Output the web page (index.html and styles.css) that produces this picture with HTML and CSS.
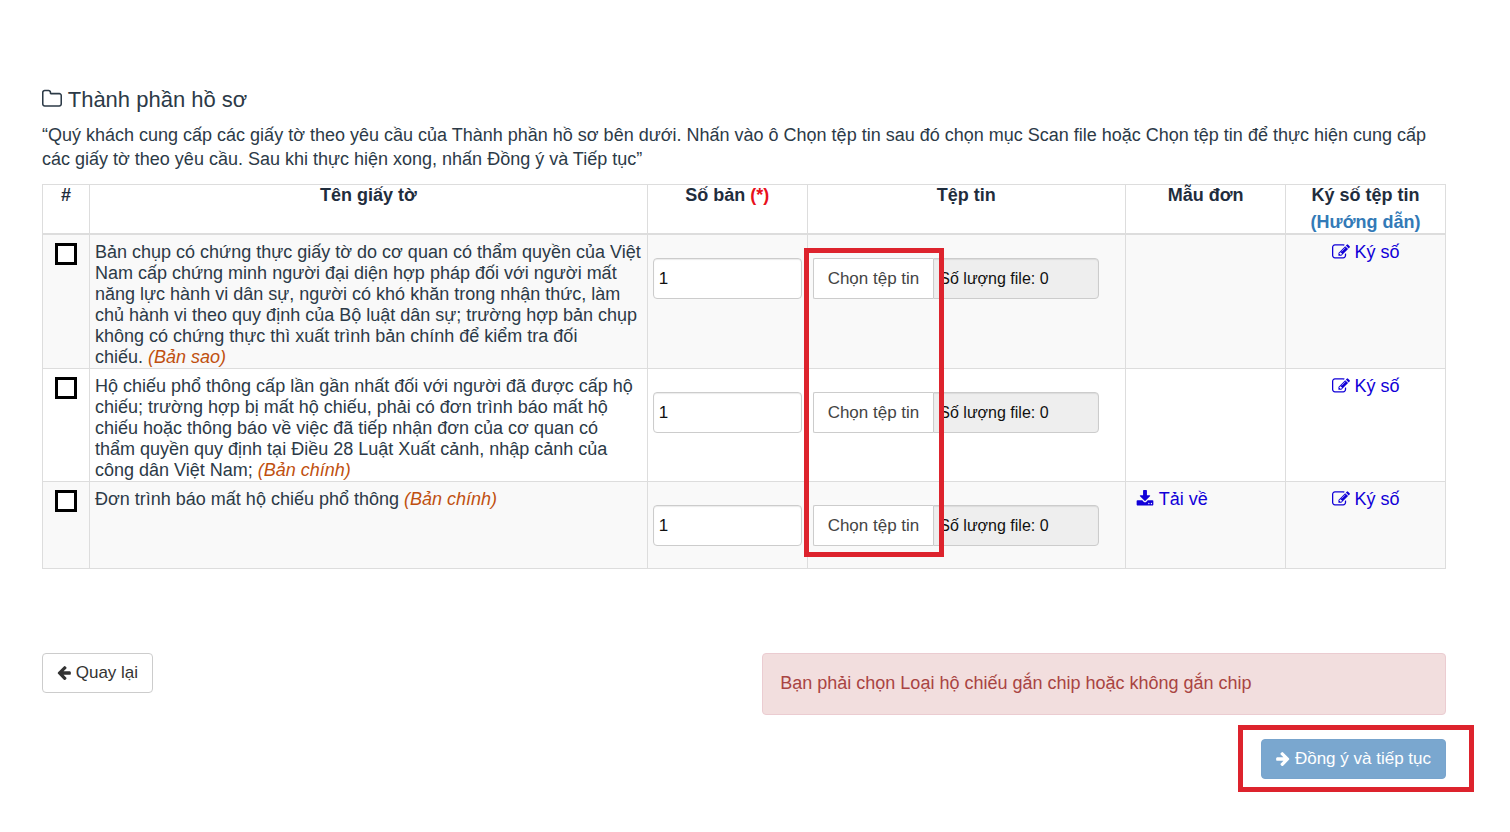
FILE: index.html
```html
<!DOCTYPE html>
<html lang="vi">
<head>
    <meta charset="UTF-8">
    <meta name="viewport" content="width=device-width, initial-scale=1.0">
    <title>Thành phần hồ sơ</title>
    <link rel="stylesheet" href="styles.css">
</head>
<body>
    <svg class="sprite" aria-hidden="true">
        <symbol id="folder" viewBox="96 0 1664 1792"><path d="M1632 1312v-704q0-40-28-68t-68-28h-704q-40 0-68-28t-28-68v-64q0-40-28-68t-68-28h-320q-40 0-68 28t-28 68v960q0 40 28 68t68 28h1216q40 0 68-28t28-68zm128-704v704q0 92-66 158t-158 66h-1216q-92 0-158-66t-66-158v-960q0-92 66-158t158-66h320q92 0 158 66t66 158v32h672q92 0 158 66t66 158z"/></symbol>
        <symbol id="arrow" viewBox="110 0 1570 1792"><path d="M1664 896v128q0 53-32.500 90.500t-84.500 37.500h-704l293 294q38 36 38 90t-38 90l-75 76q-37 37-90 37-52 0-91-37l-651-652q-37-37-37-90 0-52 37-91l651-650q38-38 91-38 52 0 90 38l75 74q38 38 38 91t-38 91l-293 293h704q52 0 84.500 37.500t32.500 90.500z"/></symbol>
        <symbol id="download" viewBox="0 0 1792 1792"><path d="M1344 1344q0-26-19-45t-45-19-45 19-19 45 19 45 45 19 45-19 19-45zm256 0q0-26-19-45t-45-19-45 19-19 45 19 45 45 19 45-19 19-45zm128-224v320q0 40-28 68t-68 28h-1472q-40 0-68-28t-28-68v-320q0-40 28-68t68-28h465l135 136q58 56 136 56t136-56l136-136h464q40 0 68 28t28 68zm-325-569q17 41-14 70l-448 448q-18 19-45 19t-45-19l-448-448q-31-29-14-70 17-39 59-39h256v-448q0-26 19-45t45-19h256q26 0 45 19t19 45v448h256q42 0 59 39z"/></symbol>
        <symbol id="edit" viewBox="0 0 1792 1792"><path d="M888 1184l116-116-152-152-116 116v56h96v96h56zm440-720q-16-16-33 1l-350 350q-17 17-1 33t33-1l350-350q17-17 1-33zm80 594v190q0 119-84.500 203.500t-203.500 84.500h-832q-119 0-203.500-84.500t-84.500-203.500v-832q0-119 84.500-203.500t203.500-84.500h832q63 0 117 25 15 7 18 23 3 17-9 29l-49 49q-14 14-32 8-23-6-45-6h-832q-66 0-113 47t-47 113v832q0 66 47 113t113 47h832q66 0 113-47t47-113v-126q0-13 9-22l64-64q15-15 35-7t20 29zm-96-738l288 288-672 672h-288v-288zm444 132l-92 92-288-288 92-92q28-28 68-28t68 28l152 152q28 28 28 68t-28 68z"/></symbol>
    </svg>

    <main class="page">
        <h1 class="title"><svg class="icon icon-title"><use href="#folder"/></svg> Thành phần hồ sơ</h1>
        <p class="intro">“Quý khách cung cấp các giấy tờ theo yêu cầu của Thành phần hồ sơ bên dưới. Nhấn vào ô Chọn tệp tin sau đó chọn mục Scan file hoặc Chọn tệp tin để thực hiện cung cấp các giấy tờ theo yêu cầu. Sau khi thực hiện xong, nhấn Đồng ý và Tiếp tục”</p>

        <table class="papers">
            <colgroup>
                <col class="col-check">
                <col class="col-name">
                <col class="col-small">
                <col class="col-file">
                <col class="col-small">
                <col class="col-small">
            </colgroup>
            <thead>
                <tr>
                    <th>#</th>
                    <th>Tên giấy tờ</th>
                    <th>Số bản <span class="required">(*)</span></th>
                    <th>Tệp tin</th>
                    <th>Mẫu đơn</th>
                    <th>Ký số tệp tin <a class="guide" href="#">(Hướng dẫn)</a></th>
                </tr>
            </thead>
            <tbody>
                <tr>
                    <td class="center"><input class="check" type="checkbox" id="paper1"></td>
                    <td><label for="paper1">Bản chụp có chứng thực giấy tờ do cơ quan có thẩm quyền của Việt Nam cấp chứng minh người đại diện hợp pháp đối với người mất năng lực hành vi dân sự, người có khó khăn trong nhận thức, làm chủ hành vi theo quy định của Bộ luật dân sự; trường hợp bản chụp không có chứng thực thì xuất trình bản chính để kiểm tra đối chiếu.&nbsp;<em class="kind">(Bản sao)</em></label></td>
                    <td class="field"><input class="copies" type="text" value="1" aria-label="Số bản"></td>
                    <td class="field file-cell">
                        <div class="file-group">
                            <button class="choose" type="button">Chọn tệp tin</button>
                            <input class="count" type="text" value="Số lượng file: 0" aria-label="Tệp tin" readonly>
                        </div>
                        <div class="mark mark-files"></div>
                    </td>
                    <td></td>
                    <td class="center"><a class="action" href="#"><svg class="icon"><use href="#edit"/></svg> Ký số</a></td>
                </tr>
                <tr>
                    <td class="center"><input class="check" type="checkbox" id="paper2"></td>
                    <td><label for="paper2">Hộ chiếu phổ thông cấp lần gần nhất đối với người đã được cấp hộ chiếu; trường hợp bị mất hộ chiếu, phải có đơn trình báo mất hộ chiếu hoặc thông báo về việc đã tiếp nhận đơn của cơ quan có thẩm quyền quy định tại Điều 28 Luật Xuất cảnh, nhập cảnh của công dân Việt Nam; <em class="kind">(Bản chính)</em></label></td>
                    <td class="field"><input class="copies" type="text" value="1" aria-label="Số bản"></td>
                    <td class="field">
                        <div class="file-group">
                            <button class="choose" type="button">Chọn tệp tin</button>
                            <input class="count" type="text" value="Số lượng file: 0" aria-label="Tệp tin" readonly>
                        </div>
                    </td>
                    <td></td>
                    <td class="center"><a class="action" href="#"><svg class="icon"><use href="#edit"/></svg> Ký số</a></td>
                </tr>
                <tr>
                    <td class="center"><input class="check" type="checkbox" id="paper3"></td>
                    <td><label for="paper3">Đơn trình báo mất hộ chiếu phổ thông <em class="kind">(Bản chính)</em></label></td>
                    <td class="field"><input class="copies" type="text" value="1" aria-label="Số bản"></td>
                    <td class="field">
                        <div class="file-group">
                            <button class="choose" type="button">Chọn tệp tin</button>
                            <input class="count" type="text" value="Số lượng file: 0" aria-label="Tệp tin" readonly>
                        </div>
                    </td>
                    <td class="form-cell"><a class="action" href="#"><svg class="icon"><use href="#download"/></svg> Tải về</a></td>
                    <td class="center"><a class="action" href="#"><svg class="icon"><use href="#edit"/></svg> Ký số</a></td>
                </tr>
            </tbody>
        </table>

        <div class="footer">
            <button class="btn" type="button"><svg class="icon icon-btn"><use href="#arrow"/></svg> Quay lại</button>
            <div class="confirm">
                <div class="alert" role="alert">Bạn phải chọn Loại hộ chiếu gắn chip hoặc không gắn chip</div>
                <div class="submit">
                    <button class="btn btn-primary" type="button"><svg class="icon icon-btn icon-flip"><use href="#arrow"/></svg> Đồng ý và tiếp tục</button>
                    <div class="mark mark-submit"></div>
                </div>
            </div>
        </div>
    </main>
</body>
</html>
```
FILE: styles.css
```css
* {
    box-sizing: border-box;
}
body {
    margin: 0;
    background-color: #fff;
    color: #2c3a47;
    font-family: "Liberation Sans", Arial, sans-serif;
    font-size: 18px;
    line-height: 21px;
}
button, input {
    font-family: inherit;
    font-size: 17px;
}
a {
    text-decoration: none;
}
.sprite {
    display: none;
}
.icon {
    width: 18px;
    height: 18px;
    fill: currentColor;
    vertical-align: -3px;
}
.icon-title {
    width: 20px;
    height: 22px;
}
.icon-btn {
    width: 14px;
    height: 17px;
}
.icon-flip {
    transform: scaleX(-1);
}
.page {
    padding: 85px 64px 40px 42px;
}
.title {
    margin: 0 0 8px;
    font-size: 22px;
    font-weight: normal;
    line-height: 30px;
}
.intro {
    margin: 0 0 13px;
    line-height: 24px;
}

/* table */
.papers {
    width: 100%;
    table-layout: fixed;
    border-collapse: collapse;
}
.col-check {
    width: 3.35%;
}
.col-name {
    width: 39.75%;
}
.col-small {
    width: 11.4%;
}
.col-file {
    width: 22.7%;
}
.papers th, .papers td {
    border: 1px solid #ddd;
    vertical-align: top;
}
.papers th {
    padding: 0;
    border-bottom-width: 2px;
    color: #1f2d3d;
}
.papers td {
    padding: 7px 5px 0;
}
.papers tbody tr:nth-child(odd) {
    background-color: #f9f9f9;
}
.papers .center {
    text-align: center;
}
.papers .field {
    padding: 23px 5px 22px;
}
.papers .form-cell {
    padding-left: 10px;
}
.required {
    color: #e8101c;
}
.guide {
    display: block;
    margin-top: 6px;
    color: #337ab7;
}
.kind {
    color: #c0500f;
}
.action {
    color: #1100d8;
}
.check {
    appearance: none;
    display: block;
    width: 22px;
    height: 22px;
    margin: 1px auto 0;
    border: 3px solid #000;
    background-color: #fff;
}
.copies, .count {
    height: 41px;
    padding: 0 5px;
    border: 1px solid #ccc;
    border-radius: 4px;
    box-shadow: inset 0 1px 1px rgba(0, 0, 0, 0.08);
    color: #111;
}
.copies {
    display: block;
    width: 100%;
}
.file-group {
    display: flex;
}
.choose {
    height: 41px;
    padding: 0 14px;
    border: 1px solid #ccc;
    border-right: 0;
    border-radius: 2px 0 0 2px;
    background-color: #fff;
    color: #444;
}
.count {
    width: 166px;
    border-radius: 0 4px 4px 0;
    background-color: #eee;
    font-size: 16px;
}

/* red frames over the controls */
.mark {
    position: absolute;
    border: 5px solid #dd232d;
    pointer-events: none;
}
.file-cell {
    position: relative;
}
.mark-files {
    top: 13px;
    left: -4px;
    width: 140px;
    height: 309px;
}
.mark-submit {
    inset: -14px -28px -13px -23px;
}

/* footer */
.footer {
    display: flex;
    justify-content: space-between;
    align-items: flex-start;
    margin-top: 84px;
}
.btn {
    height: 40px;
    padding: 0 14px;
    border: 1px solid #ccc;
    border-radius: 4px;
    background-color: #fff;
    color: #333;
}
.btn-primary {
    border-color: #78a4cd;
    background-color: #7aa7cf;
    color: #fff;
}
.confirm {
    display: flex;
    flex-direction: column;
    align-items: flex-end;
    gap: 24px;
    width: 48.7%;
}
.alert {
    width: 100%;
    padding: 19px 17px 20px;
    border: 1px solid #ebccd1;
    border-radius: 4px;
    background-color: #f2dede;
    color: #a94442;
}
.submit {
    position: relative;
}
```
